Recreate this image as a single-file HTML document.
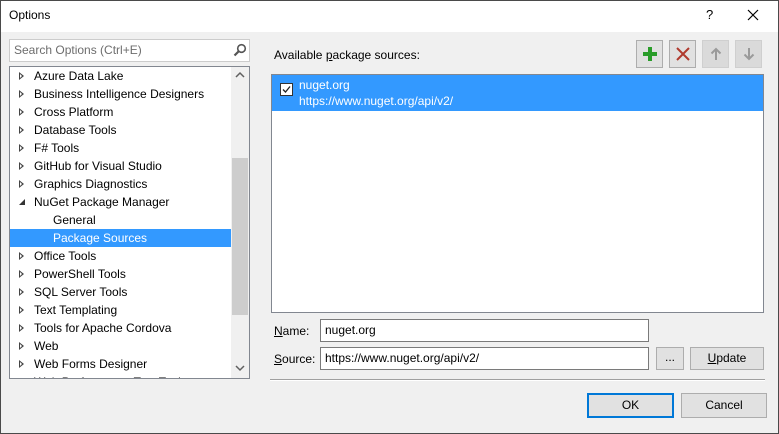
<!DOCTYPE html>
<html><head><style>
*{box-sizing:border-box;margin:0;padding:0}
body{width:779px;height:434px;overflow:hidden;background:#f0f0f0;font-family:"Liberation Sans",sans-serif;font-size:12px;color:#000;position:relative}
.a{position:absolute}
.win{left:0;top:0;width:779px;height:434px;border:1px solid #4a4a4a}
.title{left:1px;top:1px;width:777px;height:31px;background:#fff}
.row{position:absolute;left:0;height:18px;line-height:18px;white-space:nowrap}
.tri{position:absolute;left:9px;top:5px;width:0;height:0;border-top:4px solid transparent;border-bottom:4px solid transparent;border-left:5px solid #444}
.tri:after{content:"";position:absolute;left:-4px;top:-2px;border-top:2px solid transparent;border-bottom:2px solid transparent;border-left:2px solid #fff}
.btn{position:absolute;background:#e1e1e1;border:1px solid #adadad;text-align:center}
.inp{position:absolute;background:#fff;border:1px solid #7a7a7a;padding-left:4px;line-height:20px}
</style></head><body>
<div class="a win"></div>
<div class="a title"></div>
<div class="a" style="left:9px;top:8px;font-size:12px">Options</div>
<div class="a" style="left:706px;top:7px;font-size:13px">?</div>
<svg class="a" style="left:747px;top:9px" width="12" height="12"><path d="M1 1L11 11M11 1L1 11" stroke="#000" stroke-width="1.2"/></svg>

<div class="inp" style="left:9px;top:39px;width:241px;height:23px;border-color:#ccc;color:#6d6d6d;line-height:21px">Search Options (Ctrl+E)</div>
<svg class="a" style="left:233px;top:43px" width="14" height="14"><circle cx="8.5" cy="5.5" r="3.8" fill="none" stroke="#555" stroke-width="1.6"/><path d="M6 8L1.5 12.5" stroke="#555" stroke-width="2.2"/></svg>

<div class="a" style="left:9px;top:66px;width:241px;height:313px;background:#fff;border:1px solid #828790;overflow:hidden">
 <div class="a" style="left:221px;top:0;width:18px;height:311px;background:#f0f0f0"></div>
 <div class="a" style="left:222px;top:91px;width:16px;height:157px;background:#cdcdcd"></div>
 <svg class="a" style="left:225px;top:4px" width="10" height="8"><path d="M1 6L5 2L9 6" fill="none" stroke="#606060" stroke-width="1.5"/></svg>
 <svg class="a" style="left:225px;top:297px" width="10" height="8"><path d="M1 2L5 6L9 2" fill="none" stroke="#606060" stroke-width="1.5"/></svg>
 <div class="a" style="left:0;top:162px;width:221px;height:18px;background:#3399ff"></div>
 <div class="row" style="top:0"><span class="tri"></span><span style="margin-left:24px">Azure Data Lake</span></div>
 <div class="row" style="top:18px"><span class="tri"></span><span style="margin-left:24px">Business Intelligence Designers</span></div>
 <div class="row" style="top:36px"><span class="tri"></span><span style="margin-left:24px">Cross Platform</span></div>
 <div class="row" style="top:54px"><span class="tri"></span><span style="margin-left:24px">Database Tools</span></div>
 <div class="row" style="top:72px"><span class="tri"></span><span style="margin-left:24px">F# Tools</span></div>
 <div class="row" style="top:90px"><span class="tri"></span><span style="margin-left:24px">GitHub for Visual Studio</span></div>
 <div class="row" style="top:108px"><span class="tri"></span><span style="margin-left:24px">Graphics Diagnostics</span></div>
 <div class="row" style="top:126px"><svg class="a" style="left:9px;top:6px" width="7" height="7"><path d="M6 0V6H0Z" fill="#333"/></svg><span style="margin-left:24px">NuGet Package Manager</span></div>
 <div class="row" style="top:144px"><span style="margin-left:43px">General</span></div>
 <div class="row" style="top:162px;color:#fff"><span style="margin-left:43px">Package Sources</span></div>
 <div class="row" style="top:180px"><span class="tri"></span><span style="margin-left:24px">Office Tools</span></div>
 <div class="row" style="top:198px"><span class="tri"></span><span style="margin-left:24px">PowerShell Tools</span></div>
 <div class="row" style="top:216px"><span class="tri"></span><span style="margin-left:24px">SQL Server Tools</span></div>
 <div class="row" style="top:234px"><span class="tri"></span><span style="margin-left:24px">Text Templating</span></div>
 <div class="row" style="top:252px"><span class="tri"></span><span style="margin-left:24px">Tools for Apache Cordova</span></div>
 <div class="row" style="top:270px"><span class="tri"></span><span style="margin-left:24px">Web</span></div>
 <div class="row" style="top:288px"><span class="tri"></span><span style="margin-left:24px">Web Forms Designer</span></div>
 <div class="row" style="top:306px"><span class="tri"></span><span style="margin-left:24px">Web Performance Test Tools</span></div>
</div>

<div class="a" style="left:274px;top:48px">Available <u>p</u>ackage sources:</div>
<div class="btn" style="left:636px;top:40px;width:27px;height:28px"></div>
<svg class="a" style="left:641px;top:45px" width="18" height="18"><path d="M9 2V16M2 9H16" stroke="#2a9d2a" stroke-width="4"/></svg>
<div class="btn" style="left:669px;top:40px;width:27px;height:28px"></div>
<svg class="a" style="left:675px;top:46px" width="16" height="16"><path d="M2 2L14 14M14 2L2 14" stroke="#b03a2e" stroke-width="2"/></svg>
<div class="btn" style="left:702px;top:40px;width:27px;height:28px;background:#dadada;border-color:#cfcfcf"></div>
<svg class="a" style="left:708px;top:46px" width="16" height="16"><path d="M8 3V14M3.5 7.5L8 3L12.5 7.5" fill="none" stroke="#9a9a9a" stroke-width="2"/></svg>
<div class="btn" style="left:735px;top:40px;width:27px;height:28px;background:#dadada;border-color:#cfcfcf"></div>
<svg class="a" style="left:741px;top:46px" width="16" height="16"><path d="M8 2V13M3.5 8.5L8 13L12.5 8.5" fill="none" stroke="#9a9a9a" stroke-width="2"/></svg>

<div class="a" style="left:271px;top:74px;width:493px;height:239px;background:#fff;border:1px solid #828790">
 <div class="a" style="left:0;top:0;width:491px;height:36px;background:#3399ff"></div>
 <div class="a" style="left:8px;top:8px;width:13px;height:13px;background:#fff;border:1px solid #333"></div>
 <svg class="a" style="left:9px;top:9px" width="11" height="11"><path d="M2 5.5L4.5 8L9 2.5" fill="none" stroke="#222" stroke-width="1.3"/></svg>
 <div class="a" style="left:27px;top:2px;color:#fff;line-height:16px">nuget.org<br>https://www.nuget.org/api/v2/</div>
</div>

<div class="a" style="left:274px;top:324px"><u>N</u>ame:</div>
<div class="inp" style="left:320px;top:319px;width:329px;height:23px">nuget.org</div>
<div class="a" style="left:274px;top:352px"><u>S</u>ource:</div>
<div class="inp" style="left:320px;top:347px;width:329px;height:23px">https://www.nuget.org/api/v2/</div>
<div class="btn" style="left:656px;top:347px;width:28px;height:23px;line-height:19px">...</div>
<div class="btn" style="left:690px;top:347px;width:74px;height:23px;line-height:21px"><u>U</u>pdate</div>
<div class="a" style="left:270px;top:379px;width:495px;height:1px;background:#a0a0a0"></div>
<div class="a" style="left:270px;top:380px;width:495px;height:1px;background:#fff"></div>

<div class="btn" style="left:587px;top:393px;width:87px;height:25px;border:2px solid #0078d7;line-height:21px">OK</div>
<div class="btn" style="left:681px;top:393px;width:86px;height:25px;line-height:23px">Cancel</div>
</body></html>
